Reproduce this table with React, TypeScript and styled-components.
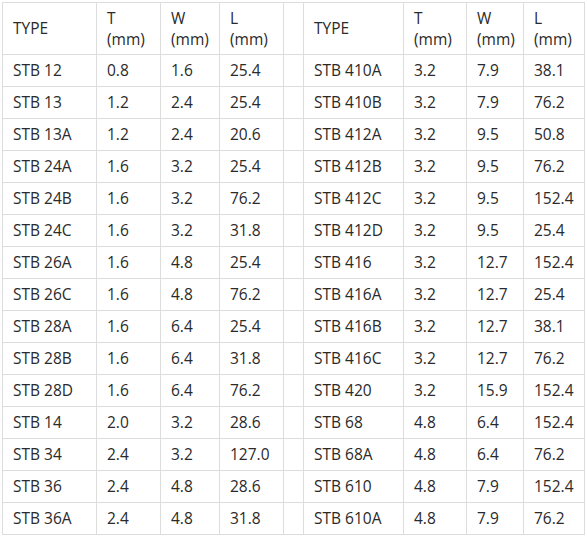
import React from "react";
import styled, { createGlobalStyle } from "styled-components";

const Global = createGlobalStyle`
  html, body { margin: 0; padding: 0; background: #fff; }
  body { font-family: "Open Sans", "Noto Sans", sans-serif; }
`;

const Table = styled.table`
  margin: 2px 0 0 2px;
  border-collapse: collapse;
  table-layout: fixed;
  width: 583px;
  font-size: 15.5px;
  color: #2a2a2a;
`;

const HeadRow = styled.tr`
  height: 52px;
`;

const Row = styled.tr`
  height: 32px;
`;

const Cell = styled.td<{ $spacer?: boolean }>`
  border: 1px solid #ddd;
  padding: 0 0 0 10px;
  vertical-align: middle;
  white-space: nowrap;
  line-height: 21px;
  ${(p) => (p.$spacer ? "padding: 0;" : "")}
`;

const widths = [94, 64, 59, 64, 20, 100, 63, 57, 61];

const left: string[][] = [
  ["STB 12", "0.8", "1.6", "25.4"],
  ["STB 13", "1.2", "2.4", "25.4"],
  ["STB 13A", "1.2", "2.4", "20.6"],
  ["STB 24A", "1.6", "3.2", "25.4"],
  ["STB 24B", "1.6", "3.2", "76.2"],
  ["STB 24C", "1.6", "3.2", "31.8"],
  ["STB 26A", "1.6", "4.8", "25.4"],
  ["STB 26C", "1.6", "4.8", "76.2"],
  ["STB 28A", "1.6", "6.4", "25.4"],
  ["STB 28B", "1.6", "6.4", "31.8"],
  ["STB 28D", "1.6", "6.4", "76.2"],
  ["STB 14", "2.0", "3.2", "28.6"],
  ["STB 34", "2.4", "3.2", "127.0"],
  ["STB 36", "2.4", "4.8", "28.6"],
  ["STB 36A", "2.4", "4.8", "31.8"],
];

const right: string[][] = [
  ["STB 410A", "3.2", "7.9", "38.1"],
  ["STB 410B", "3.2", "7.9", "76.2"],
  ["STB 412A", "3.2", "9.5", "50.8"],
  ["STB 412B", "3.2", "9.5", "76.2"],
  ["STB 412C", "3.2", "9.5", "152.4"],
  ["STB 412D", "3.2", "9.5", "25.4"],
  ["STB 416", "3.2", "12.7", "152.4"],
  ["STB 416A", "3.2", "12.7", "25.4"],
  ["STB 416B", "3.2", "12.7", "38.1"],
  ["STB 416C", "3.2", "12.7", "76.2"],
  ["STB 420", "3.2", "15.9", "152.4"],
  ["STB 68", "4.8", "6.4", "152.4"],
  ["STB 68A", "4.8", "6.4", "76.2"],
  ["STB 610", "4.8", "7.9", "152.4"],
  ["STB 610A", "4.8", "7.9", "76.2"],
];

const Head = () => (
  <>
    <Cell>TYPE</Cell>
    <Cell>T<br />(mm)</Cell>
    <Cell>W<br />(mm)</Cell>
    <Cell>L<br />(mm)</Cell>
  </>
);

export default function App() {
  return (
    <>
      <Global />
      <Table>
        <colgroup>
          {widths.map((w, i) => (
            <col key={i} style={{ width: w }} />
          ))}
        </colgroup>
        <tbody>
          <HeadRow>
            <Head />
            <Cell $spacer />
            <Head />
          </HeadRow>
          {left.map((l, i) => (
            <Row key={i}>
              {l.map((v, j) => (
                <Cell key={"l" + j}>{v}</Cell>
              ))}
              <Cell $spacer />
              {right[i].map((v, j) => (
                <Cell key={"r" + j}>{v}</Cell>
              ))}
            </Row>
          ))}
        </tbody>
      </Table>
    </>
  );
}
